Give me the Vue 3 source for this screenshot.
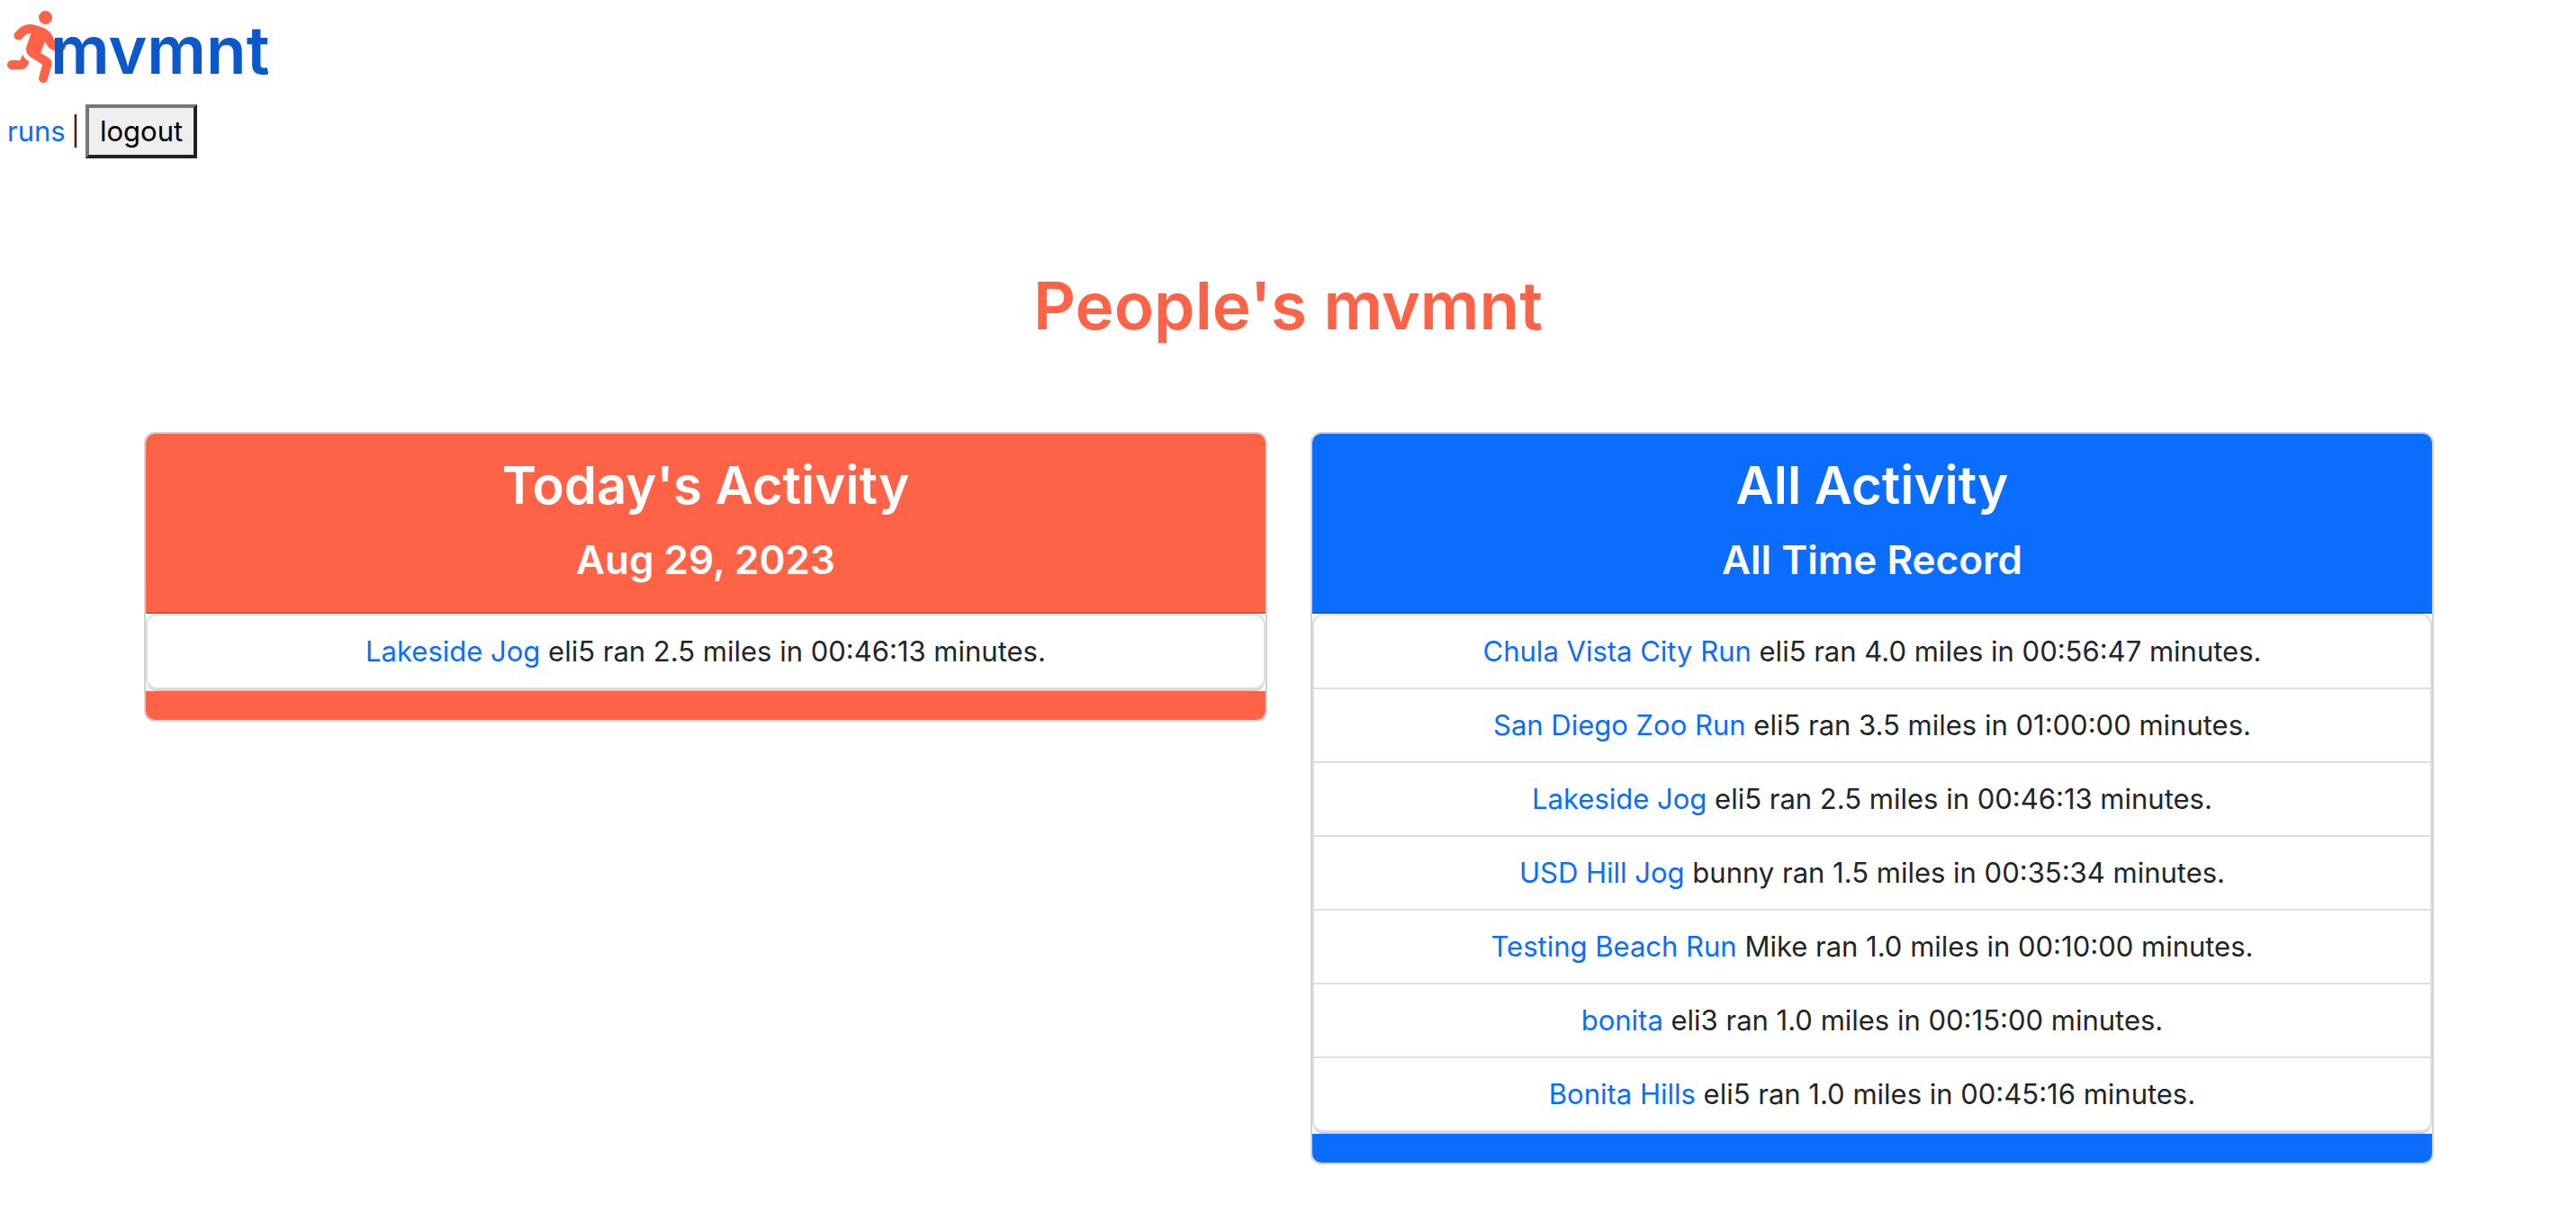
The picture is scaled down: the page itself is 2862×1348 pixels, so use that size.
<script setup>
const boards = [
  {
    id: 'today',
    title: "Today's Activity",
    subtitle: 'Aug 29, 2023',
    runs: [{ name: 'Lakeside Jog', user: 'eli5', miles: '2.5', time: '00:46:13' }],
  },
  {
    id: 'all',
    title: 'All Activity',
    subtitle: 'All Time Record',
    runs: [
      { name: 'Chula Vista City Run', user: 'eli5', miles: '4.0', time: '00:56:47' },
      { name: 'San Diego Zoo Run', user: 'eli5', miles: '3.5', time: '01:00:00' },
      { name: 'Lakeside Jog', user: 'eli5', miles: '2.5', time: '00:46:13' },
      { name: 'USD Hill Jog', user: 'bunny', miles: '1.5', time: '00:35:34' },
      { name: 'Testing Beach Run', user: 'Mike', miles: '1.0', time: '00:10:00' },
      { name: 'bonita', user: 'eli3', miles: '1.0', time: '00:15:00' },
      { name: 'Bonita Hills', user: 'eli5', miles: '1.0', time: '00:45:16' },
    ],
  },
]
</script>

<template>
  <div class="page">
    <header class="top">
      <a class="logo" href="#">
        <svg class="runner" viewBox="0 0 448 512" aria-hidden="true">
          <path d="M320 48a48 48 0 1 0 -96 0 48 48 0 1 0 96 0zM125.700 175.500c9.900-9.900 23.400-15.500 37.500-15.500c1.900 0 3.800 .1 5.600 .3L137.600 254c-9.300 28 1.700 58.800 26.800 74.500l86.200 53.900-25.400 88.800c-4.900 17 5 34.700 22 39.600s34.700-5 39.600-22l28.700-100.400c5.900-20.600-2.600-42.600-20.700-53.900L238 299l30.900-82.400 5.100 12.300C289 264.700 323.900 288 362.700 288H384c17.700 0 32-14.300 32-32s-14.300-32-32-32H362.700c-12.900 0-24.600-7.800-29.500-19.700l-6.300-15c-14.600-35.100-44.100-61.900-80.500-73.100l-48.700-15c-11.100-3.400-22.700-5.200-34.400-5.200c-31 0-60.800 12.300-82.700 34.300L57.400 153.400c-12.500 12.500-12.500 32.800 0 45.300s32.800 12.500 45.300 0l23.100-23.100zM91.200 352H32c-17.700 0-32 14.300-32 32s14.300 32 32 32h69.600c19 0 36.200-11.200 43.900-28.500L157 361.600l-9.500-6c-17.500-10.900-30.500-26.800-37.900-44.900L91.200 352z" />
        </svg>
        <span class="wordmark">mvmnt</span>
      </a>
      <nav class="nav">
        <a href="#">runs</a>
        <span>|</span>
        <button type="button">logout</button>
      </nav>
    </header>

    <main>
      <h1>People's mvmnt</h1>
      <div class="boards">
        <section v-for="board in boards" :key="board.id" class="card" :class="board.id">
          <div class="card-header">
            <h2>{{ board.title }}</h2>
            <h3>{{ board.subtitle }}</h3>
          </div>
          <ul>
            <li v-for="run in board.runs" :key="run.name">
              <a href="#">{{ run.name }}</a> {{ run.user }} ran {{ run.miles }} miles in {{ run.time }} minutes.
            </li>
          </ul>
          <div class="card-footer"></div>
        </section>
      </div>
    </main>
  </div>
</template>

<style>
body {
  margin: 0;
  background: #fff;
}
</style>

<style scoped>
.page {
  font-family: Inter, "Liberation Sans", sans-serif;
  font-size: 31px;
  line-height: 48px;
  color: #212529;
}
a {
  color: #0a6dfd;
  text-decoration: none;
}
.top {
  padding: 12px 8px 0;
}
.logo {
  display: flex;
  align-items: flex-start;
  height: 80px;
}
.runner {
  flex: none;
  width: 70px;
  height: 80px;
  margin-right: -22px;
  fill: #ff6347;
}
.wordmark {
  position: relative;
  font-size: 73px;
  font-weight: 600;
  line-height: 88px;
  color: #0a58ca;
}
.nav {
  display: flex;
  align-items: center;
  gap: 6px;
  margin-top: 24px;
}
.nav button {
  box-sizing: border-box;
  padding: 2px 12px;
  border: 4px solid;
  border-color: #767676 #212121 #212121 #767676;
  border-radius: 0;
  background: #efefef;
  color: #000;
  font: inherit;
}
h1,
h2,
h3 {
  margin: 0;
  font-weight: 600;
  text-align: center;
}
h1 {
  margin: 114px 0 90px;
  font-size: 73px;
  line-height: 100px;
  color: #ff6347;
}
.boards {
  display: flex;
  align-items: flex-start;
  gap: 48px;
  padding: 0 158px 0 160px;
}
.card {
  flex: 1;
  overflow: hidden;
  border: 2px solid #d2d2d2;
  border-radius: 12px;
}
.card-header {
  padding: 16px 32px 28px;
  border-bottom: 2px solid;
  color: #fff;
}
h2 {
  margin-bottom: 12px;
  font-size: 58px;
  line-height: 82px;
}
h3 {
  font-size: 44px;
  line-height: 60px;
}
.today .card-header,
.today .card-footer {
  background: #ff6347;
  border-color: #d2513a;
}
.all .card-header,
.all .card-footer {
  background: #0a6dfd;
  border-color: #0a5bd0;
}
ul {
  margin: 0;
  padding: 0;
  list-style: none;
  border-bottom: 2px solid #d2d2d2;
  border-radius: 12px;
}
li {
  padding: 16px 32px;
  border: 2px solid #dfdfdf;
  border-top-width: 0;
  text-align: center;
}
li:first-child {
  border-top-width: 2px;
  border-top-left-radius: 12px;
  border-top-right-radius: 12px;
}
li:last-child {
  border-bottom-left-radius: 12px;
  border-bottom-right-radius: 12px;
}
.card-footer {
  height: 32px;
}
</style>
